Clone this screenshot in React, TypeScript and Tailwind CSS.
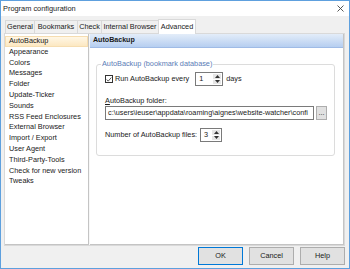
import { useState } from 'react';

const sections = [
  'AutoBackup',
  'Appearance',
  'Colors',
  'Messages',
  'Folder',
  'Update-Ticker',
  'Sounds',
  'RSS Feed Enclosures',
  'External Browser',
  'Import / Export',
  'User Agent',
  'Third-Party-Tools',
  'Check for new version',
  'Tweaks'
];

const tabs = [
  { name: 'General', w: 'w-[29px]' },
  { name: 'Bookmarks', w: 'w-[43px]' },
  { name: 'Check', w: 'w-[24px]' },
  { name: 'Internal Browser', w: 'w-[57px]' },
  { name: 'Advanced', w: 'w-[38px]' }
];

const Spinner = ({ value, width }: { value: string; width: string }) => (
  <div className={`flex h-[14px] ${width} border border-[#7a7a7a] bg-white`}>
    <span className="flex-1 pl-[3px] leading-[12px]">{value}</span>
    <div className="my-[1px] mr-[1px] flex w-[8px] flex-col gap-px">
      <span className="flex flex-1 items-center justify-center bg-[#e6e6e6]">
        <svg width="5" height="3" viewBox="0 0 5 3">
          <path d="M0 3L2.5 0L5 3Z" fill="#333" />
        </svg>
      </span>
      <span className="flex flex-1 items-center justify-center bg-[#e6e6e6]">
        <svg width="5" height="3" viewBox="0 0 5 3">
          <path d="M0 0L2.5 3L5 0Z" fill="#333" />
        </svg>
      </span>
    </div>
  </div>
);

const App = () => {
  const [selected, setSelected] = useState('AutoBackup');
  const [runBackup, setRunBackup] = useState(true);

  return (
    <div className="flex h-[269px] w-[350px] flex-col border border-[#5ea0de] bg-[#f0f0f0] font-['Liberation_Sans',Arial,sans-serif] text-[7.3px] text-[#1a1a1a]">
      {/* Title bar */}
      <div className="flex h-[15px] shrink-0 items-center justify-between bg-white pl-[2px] pr-[5px]">
        <span className="text-[7.4px]">Program configuration</span>
        <svg width="7" height="7" viewBox="0 0 7 7">
          <path d="M0.5 0.5L6.5 6.5M6.5 0.5L0.5 6.5" stroke="#444" strokeWidth="0.9" />
        </svg>
      </div>

      {/* Tabs */}
      <div className="flex h-[17px] shrink-0 items-end pl-[4px]">
        {tabs.map((t) =>
          t.name === 'Advanced' ? (
            <div
              key={t.name}
              className={`relative z-10 -mb-px flex h-[15px] ${t.w} items-center justify-center border border-b-0 border-[#d9d9d9] bg-white`}>
              {t.name}
            </div>
          ) : (
            <div
              key={t.name}
              className={`flex h-[13px] ${t.w} items-center justify-center border border-r-0 border-b-0 border-[#d9d9d9] bg-[#f0f0f0]`}>
              {t.name}
            </div>
          )
        )}
      </div>

      {/* Tab page */}
      <div className="ml-[3px] mr-[4px] flex h-[213px] shrink-0 border border-[#d9d9d9] bg-[#f7f7f7]">
        <div className="flex w-[84px] flex-col border-r border-b border-[#c4c4c4] bg-white pt-[2px]">
          {sections.map((s) => (
            <div
              key={s}
              onClick={() => setSelected(s)}
              className={
                s === selected
                  ? 'flex h-[10.8px] items-center border border-[#f6ddb0] bg-gradient-to-b from-[#fff7e6] to-[#fce8c2] pl-[3px]'
                  : 'flex h-[10.8px] items-center pl-[4px]'
              }>
              {s}
            </div>
          ))}
        </div>
        <div className="ml-px flex flex-1 flex-col border-r border-b border-[#c4c4c4] bg-white">
          <div className="flex h-[14px] shrink-0 items-center border-b border-[#9fbbe6] bg-gradient-to-b from-[#e3edf9] to-[#b6cef0] pl-[3px] text-[7.1px] font-bold">
            AutoBackup
          </div>
          <div className="pl-[6px] pr-[8px] pt-[11px]">
            <fieldset className="rounded-[3px] border border-[#dcdcdc] pb-[13px] pl-[8px]">
              <legend className="ml-[-4px] px-[1px] leading-[10px] text-[#5a7cb6]">AutoBackup (bookmark database)</legend>
              <div className="mt-[3px] flex h-[14px] items-center">
                <span
                  onClick={() => setRunBackup(!runBackup)}
                  className="mr-[2px] flex h-[8px] w-[8px] items-center justify-center border border-[#333] bg-white">
                  {runBackup && (
                    <svg width="7" height="7" viewBox="0 0 7 7">
                      <path d="M0.8 3.5L2.6 5.4L6.2 1.2" stroke="#222" strokeWidth="0.9" fill="none" />
                    </svg>
                  )}
                </span>
                <span>Run AutoBackup every</span>
                <div className="ml-[6px] mr-[3px]">
                  <Spinner value="1" width="w-[28px]" />
                </div>
                <span>days</span>
              </div>
              <div className="mt-[10px] leading-[10px]">
                <span className="underline">A</span>utoBackup folder:
              </div>
              <div className="flex items-center gap-[2px]">
                <div className="h-[14px] w-[209px] overflow-hidden whitespace-nowrap border border-[#7a7a7a] bg-white pl-[2px] leading-[12px]">
                  c:\users\ieuser\appdata\roaming\aignes\website-watcher\confi
                </div>
                <div className="flex h-[14px] w-[11px] items-center justify-center border border-[#adadad] bg-[#e1e1e1] leading-none">
                  ...
                </div>
              </div>
              <div className="mt-[8px] flex items-center">
                <span>Number of AutoBackup files:</span>
                <div className="ml-[3px]">
                  <Spinner value="3" width="w-[22px]" />
                </div>
              </div>
            </fieldset>
          </div>
        </div>
      </div>

      {/* Buttons */}
      <div className="flex flex-1 items-start justify-end gap-[6px] pr-[4px] pt-[1px]">
        <button className="h-[18px] w-[45px] border border-[#0078d7] bg-[#e1e1e1]">OK</button>
        <button className="h-[18px] w-[45px] border border-[#adadad] bg-[#e1e1e1]">Cancel</button>
        <button className="h-[18px] w-[45px] border border-[#adadad] bg-[#e1e1e1]">Help</button>
      </div>
    </div>
  );
};

export default App;
